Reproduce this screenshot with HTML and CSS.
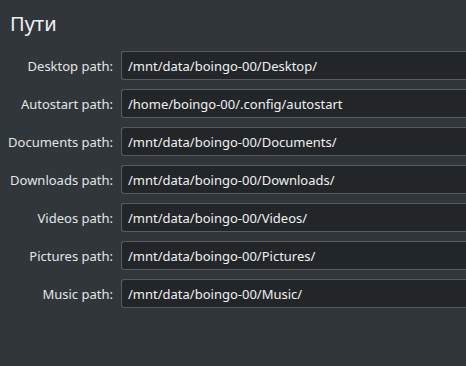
FILE: index.html
```html
<!DOCTYPE html>
<html lang="ru">

<head>
  <meta charset="UTF-8">
  <meta name="viewport" content="width=device-width, initial-scale=1.0">
  <title>Пути</title>
  <link rel="stylesheet" href="styles.css">
</head>

<body>

  <h1 class="title">Пути</h1>

  <div class="paths">
    <label class="label" for="desktop">Desktop path:</label>
    <input class="field" type="text" id="desktop" value="/mnt/data/boingo-00/Desktop/">

    <label class="label" for="autostart">Autostart path:</label>
    <input class="field" type="text" id="autostart" value="/home/boingo-00/.config/autostart">

    <label class="label" for="documents">Documents path:</label>
    <input class="field" type="text" id="documents" value="/mnt/data/boingo-00/Documents/">

    <label class="label" for="downloads">Downloads path:</label>
    <input class="field" type="text" id="downloads" value="/mnt/data/boingo-00/Downloads/">

    <label class="label" for="videos">Videos path:</label>
    <input class="field" type="text" id="videos" value="/mnt/data/boingo-00/Videos/">

    <label class="label" for="pictures">Pictures path:</label>
    <input class="field" type="text" id="pictures" value="/mnt/data/boingo-00/Pictures/">

    <label class="label" for="music">Music path:</label>
    <input class="field" type="text" id="music" value="/mnt/data/boingo-00/Music/">
  </div>

</body>

</html>
```

FILE: styles.css
```css
html,
body {
  height: 100%;
}

body {
  font-family: "Noto Sans", sans-serif;
  font-size: 13px;
  background-color: #31363b;
  color: #eff0f1;
  margin: 0;
  padding: 0;
  overflow: hidden;
}

.title {
  font-size: 20px;
  font-weight: normal;
  line-height: 27px;
  margin: 10px 0 14px 10px;
}

.paths {
  display: grid;
  grid-template-columns: 113px 1fr;
  column-gap: 8px;
  row-gap: 9px;
  align-items: center;
}

.label {
  text-align: right;
  white-space: nowrap;
  color: #e3e5e7;
}

/* the edit boxes run off the right side of the window */
.field {
  box-sizing: border-box;
  width: 100%;
  height: 29px;
  padding: 0 6px;
  font-family: inherit;
  font-size: 13px;
  color: #eff0f1;
  background-color: #232629;
  border: 1px solid #575b60;
  border-right: none;
  border-radius: 3px 0 0 3px;
  outline: none;
}
```
